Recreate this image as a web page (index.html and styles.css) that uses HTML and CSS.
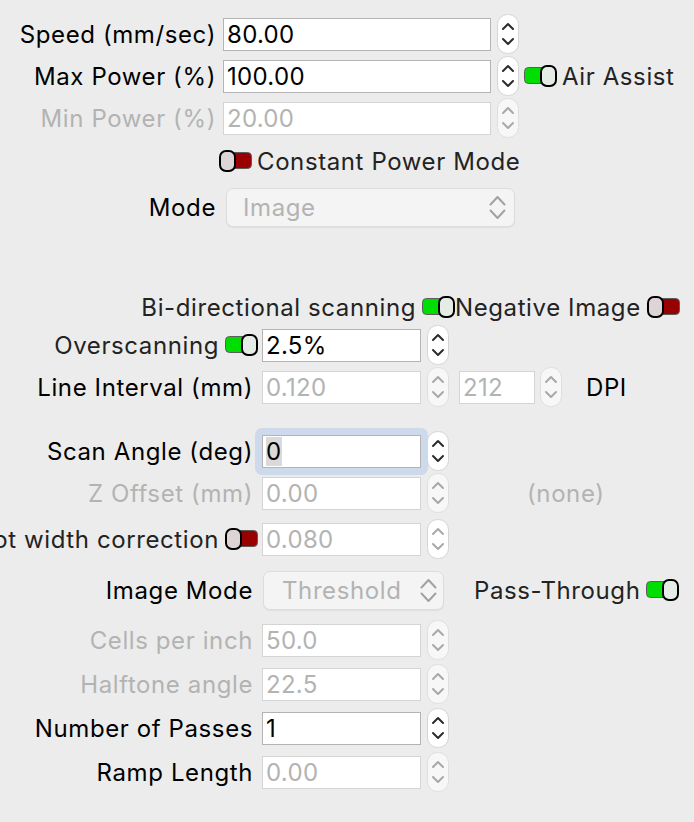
FILE: index.html
```html
<!DOCTYPE html>
<html>
<head>
<meta charset="utf-8">
<link rel="stylesheet" href="styles.css">
</head>
<body>
<div class="panel">
  <div class="s1">
    <div class="row h42">
      <div class="lab1">Speed (mm/sec)</div>
      <div class="inp wide">80.00</div>
      <svg class="spin" width="22" height="40" viewBox="0 0 22 40"><rect x="0.5" y="0.5" width="21" height="39" rx="10" fill="#fff" stroke="#d4d4d4"/><path d="M6 15 L11 10 L16 15 M6 25 L11 30 L16 25" fill="none" stroke="#2b2b2b" stroke-width="2" stroke-linecap="round" stroke-linejoin="round"/></svg>
    </div>
    <div class="row h42">
      <div class="lab1">Max Power (%)</div>
      <div class="inp wide">100.00</div>
      <svg class="spin" width="22" height="40" viewBox="0 0 22 40"><rect x="0.5" y="0.5" width="21" height="39" rx="10" fill="#fff" stroke="#d4d4d4"/><path d="M6 15 L11 10 L16 15 M6 25 L11 30 L16 25" fill="none" stroke="#2b2b2b" stroke-width="2" stroke-linecap="round" stroke-linejoin="round"/></svg>
      <svg class="tgl ml5" width="33" height="22" viewBox="0 0 33 22"><rect x="0.5" y="2.5" width="31" height="16" rx="4" fill="#00dd00" stroke="#5c5c5c"/><rect x="17" y="1" width="15" height="20" rx="6" fill="#e5ebe5" stroke="#000" stroke-width="2"/></svg>
      <span class="cb ml5">Air Assist</span>
    </div>
    <div class="row h42">
      <div class="lab1 dis-t">Min Power (%)</div>
      <div class="inp wide dis">20.00</div>
      <svg class="spin" width="22" height="40" viewBox="0 0 22 40"><rect x="0.5" y="0.5" width="21" height="39" rx="10" fill="#f7f7f7" stroke="#dedede"/><path d="M6 15 L11 10 L16 15 M6 25 L11 30 L16 25" fill="none" stroke="#a9a9a9" stroke-width="2" stroke-linecap="round" stroke-linejoin="round"/></svg>
    </div>
    <div class="row h44 cpm">
      <svg class="tgl" width="33" height="22" viewBox="0 0 33 22"><rect x="1.5" y="2.5" width="31" height="16" rx="4" fill="#990000" stroke="#5c5c5c"/><rect x="1" y="1" width="15" height="20" rx="6" fill="#ddd5d5" stroke="#000" stroke-width="2"/></svg>
      <span class="cb ml5">Constant Power Mode</span>
    </div>
    <div class="row h48">
      <div class="lab1">Mode</div>
      <div class="sel mode dis-t">
        <span>Image</span>
        <svg width="17" height="25" viewBox="0 0 17 25"><path d="M1.5 9.5 L8.5 2 L15.5 9.5 M1.5 15.5 L8.5 23 L15.5 15.5" fill="none" stroke="#a2a2a2" stroke-width="2" stroke-linecap="round" stroke-linejoin="round"/></svg>
      </div>
    </div>
  </div>

  <div class="s2">
    <div class="row bi">
      <div class="bi-left">
        <span class="cb">Bi-directional scanning</span>
        <svg class="tgl" width="33" height="22" viewBox="0 0 33 22"><rect x="0.5" y="2.5" width="31" height="16" rx="4" fill="#00dd00" stroke="#5c5c5c"/><rect x="17" y="1" width="15" height="20" rx="6" fill="#e5ebe5" stroke="#000" stroke-width="2"/></svg>
      </div>
      <span class="cb">Negative Image</span>
      <svg class="tgl ml6" width="33" height="22" viewBox="0 0 33 22"><rect x="1.5" y="2.5" width="31" height="16" rx="4" fill="#990000" stroke="#5c5c5c"/><rect x="1" y="1" width="15" height="20" rx="6" fill="#ddd5d5" stroke="#000" stroke-width="2"/></svg>
    </div>

    <div class="row">
      <div class="lab2 withtgl">
        <span class="cb">Overscanning</span>
        <svg class="tgl" width="33" height="22" viewBox="0 0 33 22"><rect x="0.5" y="2.5" width="31" height="16" rx="4" fill="#00dd00" stroke="#5c5c5c"/><rect x="17" y="1" width="15" height="20" rx="6" fill="#e5ebe5" stroke="#000" stroke-width="2"/></svg>
      </div>
      <div class="inp mid">2.5%</div>
      <svg class="spin" width="22" height="40" viewBox="0 0 22 40"><rect x="0.5" y="0.5" width="21" height="39" rx="10" fill="#fff" stroke="#d4d4d4"/><path d="M6 15 L11 10 L16 15 M6 25 L11 30 L16 25" fill="none" stroke="#2b2b2b" stroke-width="2" stroke-linecap="round" stroke-linejoin="round"/></svg>
    </div>

    <div class="row mt2">
      <div class="lab2">Line Interval (mm)</div>
      <div class="inp mid dis">0.120</div>
      <svg class="spin" width="22" height="40" viewBox="0 0 22 40"><rect x="0.5" y="0.5" width="21" height="39" rx="10" fill="#f7f7f7" stroke="#dedede"/><path d="M6 15 L11 10 L16 15 M6 25 L11 30 L16 25" fill="none" stroke="#a9a9a9" stroke-width="2" stroke-linecap="round" stroke-linejoin="round"/></svg>
      <div class="inp small dis">212</div>
      <svg class="spin sp5" width="22" height="40" viewBox="0 0 22 40"><rect x="0.5" y="0.5" width="21" height="39" rx="10" fill="#f7f7f7" stroke="#dedede"/><path d="M6 15 L11 10 L16 15 M6 25 L11 30 L16 25" fill="none" stroke="#a9a9a9" stroke-width="2" stroke-linecap="round" stroke-linejoin="round"/></svg>
      <span class="dpi">DPI</span>
    </div>

    <div class="row mt24">
      <div class="lab2">Scan Angle (deg)</div>
      <div class="inp mid focus"><span class="selected">0</span></div>
      <svg class="spin" width="22" height="40" viewBox="0 0 22 40"><rect x="0.5" y="0.5" width="21" height="39" rx="10" fill="#fff" stroke="#d4d4d4"/><path d="M6 15 L11 10 L16 15 M6 25 L11 30 L16 25" fill="none" stroke="#2b2b2b" stroke-width="2" stroke-linecap="round" stroke-linejoin="round"/></svg>
    </div>

    <div class="row mt2">
      <div class="lab2 dis-t">Z Offset (mm)</div>
      <div class="inp mid dis">0.00</div>
      <svg class="spin" width="22" height="40" viewBox="0 0 22 40"><rect x="0.5" y="0.5" width="21" height="39" rx="10" fill="#f7f7f7" stroke="#dedede"/><path d="M6 15 L11 10 L16 15 M6 25 L11 30 L16 25" fill="none" stroke="#a9a9a9" stroke-width="2" stroke-linecap="round" stroke-linejoin="round"/></svg>
      <span class="none dis-t">(none)</span>
    </div>

    <div class="row mt6">
      <div class="lab2 withtgl">
        <span class="cb">Dot width correction</span>
        <svg class="tgl" width="33" height="22" viewBox="0 0 33 22"><rect x="1.5" y="2.5" width="31" height="16" rx="4" fill="#990000" stroke="#5c5c5c"/><rect x="1" y="1" width="15" height="20" rx="6" fill="#ddd5d5" stroke="#000" stroke-width="2"/></svg>
      </div>
      <div class="inp mid dis">0.080</div>
      <svg class="spin" width="22" height="40" viewBox="0 0 22 40"><rect x="0.5" y="0.5" width="21" height="39" rx="10" fill="#fff" stroke="#d4d4d4"/><path d="M6 15 L11 10 L16 15 M6 25 L11 30 L16 25" fill="none" stroke="#a9a9a9" stroke-width="2" stroke-linecap="round" stroke-linejoin="round"/></svg>
    </div>

    <div class="row mt11">
      <div class="lab2">Image Mode</div>
      <div class="sel imode dis-t">
        <span>Threshold</span>
        <svg width="17" height="25" viewBox="0 0 17 25"><path d="M1.5 9.5 L8.5 2 L15.5 9.5 M1.5 15.5 L8.5 23 L15.5 15.5" fill="none" stroke="#a2a2a2" stroke-width="2" stroke-linecap="round" stroke-linejoin="round"/></svg>
      </div>
      <span class="cb pass">Pass-Through</span>
      <svg class="tgl ml6" width="33" height="22" viewBox="0 0 33 22"><rect x="0.5" y="2.5" width="31" height="16" rx="4" fill="#00dd00" stroke="#5c5c5c"/><rect x="17" y="1" width="15" height="20" rx="6" fill="#e5ebe5" stroke="#000" stroke-width="2"/></svg>
    </div>

    <div class="row mt10">
      <div class="lab2 dis-t">Cells per inch</div>
      <div class="inp mid dis">50.0</div>
      <svg class="spin" width="22" height="40" viewBox="0 0 22 40"><rect x="0.5" y="0.5" width="21" height="39" rx="10" fill="#f7f7f7" stroke="#dedede"/><path d="M6 15 L11 10 L16 15 M6 25 L11 30 L16 25" fill="none" stroke="#a9a9a9" stroke-width="2" stroke-linecap="round" stroke-linejoin="round"/></svg>
    </div>

    <div class="row mt4">
      <div class="lab2 dis-t">Halftone angle</div>
      <div class="inp mid dis">22.5</div>
      <svg class="spin" width="22" height="40" viewBox="0 0 22 40"><rect x="0.5" y="0.5" width="21" height="39" rx="10" fill="#f7f7f7" stroke="#dedede"/><path d="M6 15 L11 10 L16 15 M6 25 L11 30 L16 25" fill="none" stroke="#a9a9a9" stroke-width="2" stroke-linecap="round" stroke-linejoin="round"/></svg>
    </div>

    <div class="row mt4">
      <div class="lab2">Number of Passes</div>
      <div class="inp mid">1</div>
      <svg class="spin" width="22" height="40" viewBox="0 0 22 40"><rect x="0.5" y="0.5" width="21" height="39" rx="10" fill="#fff" stroke="#d4d4d4"/><path d="M6 15 L11 10 L16 15 M6 25 L11 30 L16 25" fill="none" stroke="#2b2b2b" stroke-width="2" stroke-linecap="round" stroke-linejoin="round"/></svg>
    </div>

    <div class="row mt4">
      <div class="lab2">Ramp Length</div>
      <div class="inp mid dis">0.00</div>
      <svg class="spin" width="22" height="40" viewBox="0 0 22 40"><rect x="0.5" y="0.5" width="21" height="39" rx="10" fill="#f7f7f7" stroke="#dedede"/><path d="M6 15 L11 10 L16 15 M6 25 L11 30 L16 25" fill="none" stroke="#a9a9a9" stroke-width="2" stroke-linecap="round" stroke-linejoin="round"/></svg>
    </div>
  </div>
</div>
</body>
</html>
```

FILE: styles.css
```css
html, body {
  margin: 0;
  padding: 0;
  background: #ececec;
}
body {
  width: 694px;
  height: 822px;
  overflow: hidden;
  font-family: Inter, "Noto Sans", sans-serif;
  font-size: 24px;
  letter-spacing: 0.6px;
  color: #000;
}
.panel {
  padding-top: 13px;
}
.row {
  display: flex;
  align-items: center;
  height: 40px;
  white-space: nowrap;
}
.h42 { height: 42px; }
.h44 { height: 44px; }
.h48 { height: 48px; }
.mt2 { margin-top: 2px; }
.mt4 { margin-top: 4px; }
.mt6 { margin-top: 6px; }
.mt10 { margin-top: 10px; }
.mt11 { margin-top: 11px; }
.mt24 { margin-top: 24px; }
.ml5 { margin-left: 5px; }
.ml6 { margin-left: 6px; }

.lab1 {
  width: 216px;
  flex: none;
  display: flex;
  justify-content: flex-end;
}
.lab2 {
  width: 253px;
  padding-right: 5px;
  flex: none;
  display: flex;
  justify-content: flex-end;
  align-items: center;
}
.lab2.withtgl {
  padding-right: 0;
  width: 258px;
  gap: 6px;
}
.dis-t { color: #b3b3b3; }
.cb { color: #232323; }

.inp {
  box-sizing: border-box;
  height: 33px;
  border: 1px solid #b4b4b4;
  background: #fff;
  padding: 0 3px;
  display: flex;
  align-items: center;
  flex: none;
  color: #000;
  letter-spacing: 0.3px;
}
.inp.dis {
  border-color: #d4d4d4;
  color: #b3b3b3;
}
.wide { width: 268px; margin-left: 7px; }
.mid { width: 159px; margin-left: 4px; }
.small { width: 76px; margin-left: 10px; }

.spin { flex: none; margin-left: 6px; display: block; }
.spin.sp5 { margin-left: 5px; }
.tgl { flex: none; display: block; }

.cpm { padding-left: 219px; }

.sel {
  box-sizing: border-box;
  height: 39px;
  display: flex;
  align-items: center;
  justify-content: space-between;
  background: #f4f4f4;
  border: 1px solid #dcdcdc;
  border-radius: 7px;
  box-shadow: 0 1px 1px rgba(0, 0, 0, 0.06);
  flex: none;
}
.sel.mode {
  width: 289px;
  margin-left: 10px;
  padding: 0 8px 0 16px;
}
.sel.imode {
  width: 181px;
  margin-left: 5px;
  padding: 0 6px 0 18px;
}

.s2 { margin-top: 58px; }
.row.bi { height: 36px; }
.bi-left {
  width: 455px;
  flex: none;
  display: flex;
  justify-content: flex-end;
  align-items: center;
  gap: 6px;
}

.dpi { margin-left: 24px; }
.none { margin-left: 78px; }
.pass { margin-left: 30px; }

.focus { position: relative; }
.focus::after {
  content: "";
  position: absolute;
  left: -8px;
  top: -8px;
  right: -8px;
  bottom: -8px;
  border: 7px solid #cddaec;
  border-radius: 7px;
  pointer-events: none;
}
.selected {
  background: #dadada;
  padding-right: 1px;
}
```
